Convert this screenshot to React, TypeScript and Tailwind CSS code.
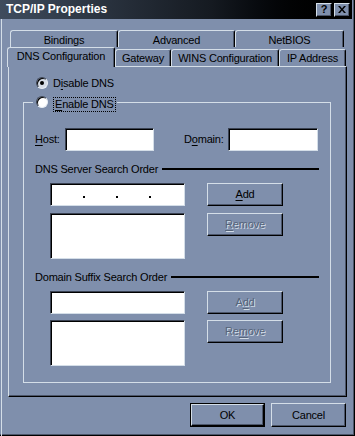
import type { ReactNode } from 'react'

// Win98-style TCP/IP Properties dialog, DNS tab

const sunken =
  'bg-white border border-t-[#3a4252] border-l-[#3a4252] border-r-[#d4dee8] border-b-[#d4dee8] shadow-[inset_1px_1px_0_#000]'

function Key({ children }: { children: ReactNode }) {
  return <span className="underline underline-offset-[2px]">{children}</span>
}

function Button({ children, disabled, primary, className = '' }: {
  children: ReactNode
  disabled?: boolean
  primary?: boolean
  className?: string
}) {
  return (
    <div className={`${primary ? 'border border-black' : ''} ${className}`}>
      <div
        className={`h-full flex items-center justify-center border border-t-[#d4dee8] border-l-[#d4dee8] border-r-black border-b-black shadow-[inset_-1px_-1px_0_#4c566a] ${
          disabled ? 'text-[#56647a] [text-shadow:1px_1px_0_#d4dee8]' : 'text-black'
        }`}
      >
        {children}
      </div>
    </div>
  )
}

function Radio({ checked, pressed }: { checked?: boolean; pressed?: boolean }) {
  return (
    <span
      className={`w-[12px] h-[12px] shrink-0 rounded-full flex items-center justify-center border border-t-[#3a4252] border-l-[#3a4252] border-r-[#e8eef4] border-b-[#e8eef4] shadow-[inset_1px_1px_0_#000] ${
        pressed ? 'bg-[#d6dce6]' : 'bg-white'
      }`}
    >
      {checked && <span className="w-[4px] h-[4px] rounded-full bg-black" />}
    </span>
  )
}

function BackTab({ label, width }: { label: string; width: string }) {
  return (
    <div
      className={`${width} h-[17px] pt-[2px] flex items-center justify-center border-l border-t border-r border-[#d4dee8] border-r-black rounded-tl-[3px] rounded-tr-[2px] shadow-[inset_-1px_0_0_#4c566a]`}
    >
      {label}
    </div>
  )
}

function FrontTab({ label, width }: { label: string; width: string }) {
  return (
    <div
      className={`${width} h-[17px] flex items-center justify-center border-l border-t border-r border-[#d4dee8] border-r-black rounded-tl-[3px] rounded-tr-[2px] shadow-[inset_-1px_0_0_#4c566a]`}
    >
      {label}
    </div>
  )
}

function SectionTitle({ children }: { children: ReactNode }) {
  return (
    <div className="h-[14px] flex items-center">
      <span>{children}</span>
      <div className="flex-1 h-[2px] bg-black ml-[4px]" />
    </div>
  )
}

export default function App() {
  return (
    <div className="w-[355px] h-[436px] bg-[#7f8fac] flex flex-col font-['Liberation_Sans',Arial,sans-serif] text-[11px] tracking-[-0.2px] leading-[13px] text-black shadow-[inset_-1px_-1px_0_#000,inset_-2px_-2px_0_#4c566a] overflow-hidden">
      {/* title bar */}
      <div className="w-[352px] h-[19px] shrink-0 flex items-center pl-[6px] pr-[2px] bg-linear-to-r from-[#3f4c5e] via-[#151a21] via-60% to-black">
        <span className="text-white font-bold text-[12px] tracking-normal">TCP/IP Properties</span>
        <div className="ml-auto flex gap-[2px]">
          <div className="w-[16px] h-[14px] bg-[#7f8fac] border border-t-[#d4dee8] border-l-[#d4dee8] border-r-black border-b-black shadow-[inset_-1px_-1px_0_#4c566a] flex items-center justify-center font-bold text-[11px] leading-none">
            ?
          </div>
          <div className="w-[16px] h-[14px] bg-[#7f8fac] border border-t-[#d4dee8] border-l-[#d4dee8] border-r-black border-b-black shadow-[inset_-1px_-1px_0_#4c566a] flex items-center justify-center">
            <svg width="8" height="7" viewBox="0 0 8 7">
              <path d="M0 0 L2 0 L4 2.5 L6 0 L8 0 L5 3.5 L8 7 L6 7 L4 4.5 L2 7 L0 7 L3 3.5 Z" fill="#000" />
            </svg>
          </div>
        </div>
      </div>

      <div className="flex-1 ml-[1px] border-l border-[#d4dee8] pt-[11px]">
        {/* tabs, back row */}
        <div className="flex h-[17px] ml-[8px]">
          <BackTab label="Bindings" width="w-[108px]" />
          <BackTab label="Advanced" width="w-[117px]" />
          <BackTab label="NetBIOS" width="w-[109px]" />
        </div>
        {/* tabs, front row */}
        <div className="flex items-end h-[19px] ml-[5px]">
          <div className="relative z-10 w-[108px] h-[20px] -mb-[1px] pb-[2px] bg-[#7f8fac] flex items-center justify-center border-l border-t border-r border-[#d4dee8] border-r-black rounded-tl-[3px] rounded-tr-[2px] shadow-[inset_-1px_0_0_#4c566a]">
            DNS Configuration
          </div>
          <FrontTab label="Gateway" width="w-[56px]" />
          <FrontTab label="WINS Configuration" width="w-[108px]" />
          <FrontTab label="IP Address" width="w-[67px]" />
        </div>

        {/* tab page */}
        <div className="w-[339px] h-[331px] ml-[6px] pt-[10px] border border-t-[#d4dee8] border-l-[#d4dee8] border-r-black border-b-black shadow-[inset_-1px_-1px_0_#4c566a]">
          <div className="h-[12px] flex items-center pl-[27px]">
            <Radio checked pressed />
            <span className="ml-[5px]">
              D<Key>i</Key>sable DNS
            </span>
          </div>

          <fieldset className="mt-[7px] ml-[14px] w-[308px] border border-[#d4dee8] pl-[11px] pr-[11px] pb-[16px]">
            <legend className="-ml-[2px] pl-[3px] pr-[1px] h-[13px] flex items-start">
              <Radio />
              <span className="ml-[5px] mt-[1px] h-[15px] px-[1px] border border-dotted border-black">
                <Key>E</Key>nable DNS
              </span>
            </legend>

            <div className="mt-[19px] h-[23px] flex items-center">
              <span className="w-[30px]">
                <Key>H</Key>ost:
              </span>
              <div className={`w-[89px] h-[23px] ${sunken}`} />
              <span className="ml-[30px] w-[44px]">
                D<Key>o</Key>main:
              </span>
              <div className={`w-[90px] h-[23px] ${sunken}`} />
            </div>

            <div className="mt-[11px]">
              <SectionTitle>DNS Server Search Order</SectionTitle>
            </div>
            <div className="mt-[7px] pl-[15px] flex">
              <div className={`w-[135px] h-[23px] flex items-end pb-[7px] pl-[32px] gap-[31px] ${sunken}`}>
                <span className="w-[2px] h-[2px] bg-black" />
                <span className="w-[2px] h-[2px] bg-black" />
                <span className="w-[2px] h-[2px] bg-black" />
              </div>
              <Button className="ml-[22px] w-[76px] h-[23px]">
                <Key>A</Key>dd
              </Button>
            </div>
            <div className="mt-[7px] pl-[15px] flex items-start">
              <div className={`w-[135px] h-[46px] ${sunken}`} />
              <Button disabled className="ml-[22px] w-[76px] h-[23px]">
                <Key>R</Key>emove
              </Button>
            </div>

            <div className="mt-[11px]">
              <SectionTitle>Domain Suffix Search Order</SectionTitle>
            </div>
            <div className="mt-[7px] pl-[15px] flex">
              <div className={`w-[135px] h-[23px] ${sunken}`} />
              <Button disabled className="ml-[22px] w-[76px] h-[23px]">
                A<Key>d</Key>d
              </Button>
            </div>
            <div className="mt-[6px] pl-[15px] flex items-start">
              <div className={`w-[135px] h-[46px] ${sunken}`} />
              <Button disabled className="ml-[22px] w-[76px] h-[23px]">
                Re<Key>m</Key>ove
              </Button>
            </div>
          </fieldset>
        </div>

        {/* dialog buttons */}
        <div className="mt-[6px] w-[344px] flex justify-end gap-[6px]">
          <Button primary className="w-[75px] h-[24px]">OK</Button>
          <Button className="w-[75px] h-[24px]">Cancel</Button>
        </div>
      </div>
    </div>
  )
}
